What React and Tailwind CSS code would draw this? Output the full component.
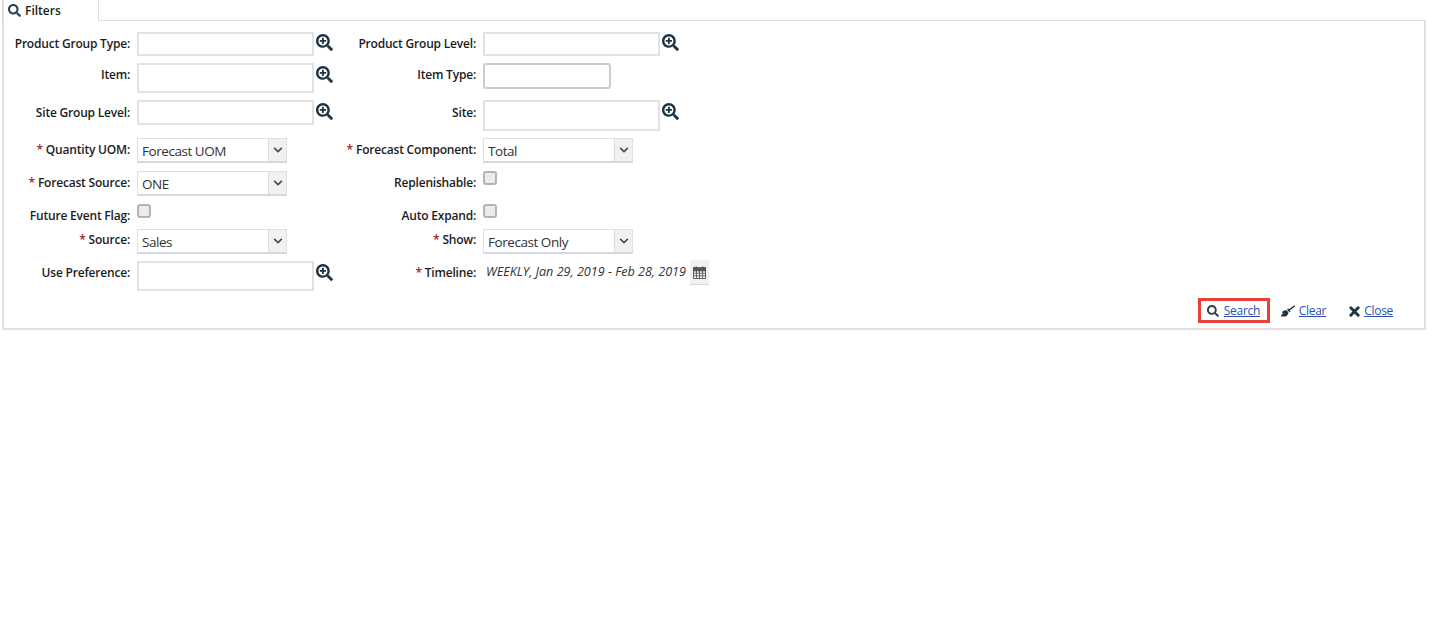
import React from "react";
import { FaSearch, FaSearchPlus, FaBroom, FaChevronDown } from "react-icons/fa";

const Lookup = ({ className = "mt-[2px]" }) => <FaSearchPlus className={`ml-[2px] ${className} w-[17px] h-[17px] text-[#1d3445] shrink-0`} />;

const Label = ({ req, children, className = "" }) => (
  <div className={`w-[126px] shrink-0 flex justify-end whitespace-nowrap text-[12px] tracking-[-0.2px] leading-[16px] font-semibold text-[#1c1c1c] ${className}`}>
    {req && <span className="text-[#9b1c2e] mr-[3px]">*</span>}
    <span>{children}</span>
  </div>
);

const TextBox = ({ h = "h-[24px]", w = "w-[177px]", round = false }) => (
  <div className={`${w} ${h} shrink-0 bg-white border-2 ${round ? "border-[#cdcdcd] rounded-[3px]" : "border-[#e2e2e2]"}`} />
);

const Select = ({ value, w = "w-[150px]" }) => (
  <div className={`${w} h-[25px] shrink-0 flex border border-[#e0e0e0] border-b-2 border-b-[#d4d8e0] bg-white`}>
    <div className="flex-1 pl-[4px] pt-[3px] text-[13.5px] tracking-[-0.45px] leading-[19px] text-[#333]">{value}</div>
    <div className="w-[18px] flex items-center justify-center bg-[#f1f1f1] border-l border-[#dcdcdc]">
      <FaChevronDown className="w-[10px] h-[10px] text-[#3d4a55]" />
    </div>
  </div>
);

const Check = () => <div className="w-[14px] h-[14px] rounded-[3px] border-2 border-[#b4b4b4] bg-[#ececec]" />;

const Cell = ({ left, labelTop = "mt-[4px]", children }) => (
  <div className={`flex items-start gap-[7px] ${left ? "w-[346px]" : ""}`}>
    <Label className={labelTop}>{children[0]}</Label>
    <div className="flex items-start">{children[1]}</div>
  </div>
);

const Row = ({ h, children }) => <div className={`flex ${h}`}>{children}</div>;

const Calendar = () => (
  <svg viewBox="0 0 14 14" className="w-[13px] h-[15px]" fill="none" stroke="#555" strokeWidth="1">
    <rect x="0.5" y="2" width="13" height="11.5" fill="#fff" />
    <path d="M0.5 5.2h13M0.5 7.8h13M0.5 10.5h13M3.7 5v8.5M7 5v8.5M10.3 5v8.5" />
    <path d="M3.5 0.5v2.5M10.5 0.5v2.5" strokeWidth="1.6" />
    <rect x="0.5" y="2" width="13" height="3" fill="#555" />
  </svg>
);

const ThickX = () => (
  <svg viewBox="0 0 12 12" className="w-[11px] h-[11px] mt-[2px]" fill="none" stroke="#1d3445" strokeWidth="3.2" strokeLinecap="round">
    <path d="M2 2l8 8M10 2l-8 8" />
  </svg>
);

const Action = ({ icon, children, className = "" }) => (
  <div className={`flex items-center gap-[4px] text-[12px] tracking-[-0.3px] leading-[16px] ${className}`}>
    {icon}
    <a href="#" className="text-[#2a4fb8] underline">{children}</a>
  </div>
);

export default function App() {
  return (
    <div className="w-[1442px] h-[634px] bg-white relative overflow-hidden" style={{ fontFamily: '"Open Sans", sans-serif' }}>
      <div className="ml-[2px] w-[1424px] h-[330px] flex flex-col">
        <div className="h-[21px] flex">
          <div className="w-[97px] h-[21px] border-l-2 border-r border-[#dcdcdc] bg-white flex items-center pl-[4px] gap-[4px]">
            <FaSearch className="w-[13px] h-[13px] text-[#2b4052]" />
            <span className="text-[12px] font-semibold text-[#1c1c1c]">Filters</span>
          </div>
          <div className="flex-1 border-b border-[#dcdcdc]" />
        </div>
        <div className="flex-1 border-2 border-t-0 border-[#e0e0e0] flex flex-col pt-[11px]">
          <Row h="h-[31px]">
            <Cell left>{["Product Group Type:", <><TextBox /><Lookup /></>]}</Cell>
            <Cell>{["Product Group Level:", <><TextBox /><Lookup /></>]}</Cell>
          </Row>
          <Row h="h-[37px]">
            <Cell left>{["Item:", <><TextBox h="h-[30px]" /><Lookup className="mt-[3px]" /></>]}</Cell>
            <Cell>{["Item Type:", <TextBox w="w-[128px]" h="h-[26px]" round />]}</Cell>
          </Row>
          <Row h="h-[38px]">
            <Cell left labelTop="mt-[5px]">{["Site Group Level:", <><TextBox h="h-[25px]" /><Lookup className="mt-[3px]" /></>]}</Cell>
            <Cell labelTop="mt-[5px]">{["Site:", <><TextBox h="h-[31px]" /><Lookup className="mt-[3px]" /></>]}</Cell>
          </Row>
          <Row h="h-[33px]">
            <div className="flex items-start gap-[7px] w-[346px]"><Label req className="mt-[4px]">Quantity UOM:</Label><Select value="Forecast UOM" /></div>
            <div className="flex items-start gap-[7px]"><Label req className="mt-[4px]">Forecast Component:</Label><Select value="Total" /></div>
          </Row>
          <Row h="h-[33px]">
            <div className="flex items-start gap-[7px] w-[346px]"><Label req className="mt-[4px]">Forecast Source:</Label><Select value="ONE" /></div>
            <div className="flex items-start gap-[7px]"><Label className="mt-[4px]">Replenishable:</Label><Check /></div>
          </Row>
          <Row h="h-[25px]">
            <div className="flex items-start gap-[7px] w-[346px]"><Label className="mt-[4px]">Future Event Flag:</Label><Check /></div>
            <div className="flex items-start gap-[7px]"><Label className="mt-[4px]">Auto Expand:</Label><Check /></div>
          </Row>
          <Row h="h-[32px]">
            <div className="flex items-start gap-[7px] w-[346px]"><Label req className="mt-[3px]">Source:</Label><Select value="Sales" /></div>
            <div className="flex items-start gap-[7px]"><Label req className="mt-[3px]">Show:</Label><Select value="Forecast Only" /></div>
          </Row>
          <Row h="h-[33px]">
            <Cell left>{["Use Preference:", <><TextBox h="h-[30px]" /><Lookup className="mt-[3px]" /></>]}</Cell>
            <div className="flex items-start gap-[7px]">
              <Label req className="mt-[4px]">Timeline:</Label>
              <div className="flex items-start">
                <span className="ml-[3px] mt-[2px] text-[12.6px] leading-[17px] italic text-[#333] whitespace-nowrap">WEEKLY, Jan 29, 2019 - Feb 28, 2019</span>
                <div className="ml-[4px] -mt-[1px] w-[19px] h-[25px] flex items-center justify-center bg-[#f1f1f1] border-b border-[#d4d8e0]"><Calendar /></div>
              </div>
            </div>
          </Row>
          <div className="flex justify-end pr-[31px] pt-[4px]">
            <div className="flex items-center border-[3px] border-[#e8403a] h-[25px] w-[72px] pl-[6px] gap-[5px] text-[12px] tracking-[-0.3px] mr-[11px]">
              <FaSearch className="w-[12px] h-[12px] text-[#2b4052]" />
              <a href="#" className="text-[#2a4fb8] underline leading-[16px]">Search</a>
            </div>
            <Action icon={<FaBroom className="w-[14px] h-[14px] text-[#1d3445]" />} className="mr-[23px]">Clear</Action>
            <Action icon={<ThickX />}>Close</Action>
          </div>
        </div>
      </div>
    </div>
  );
}
